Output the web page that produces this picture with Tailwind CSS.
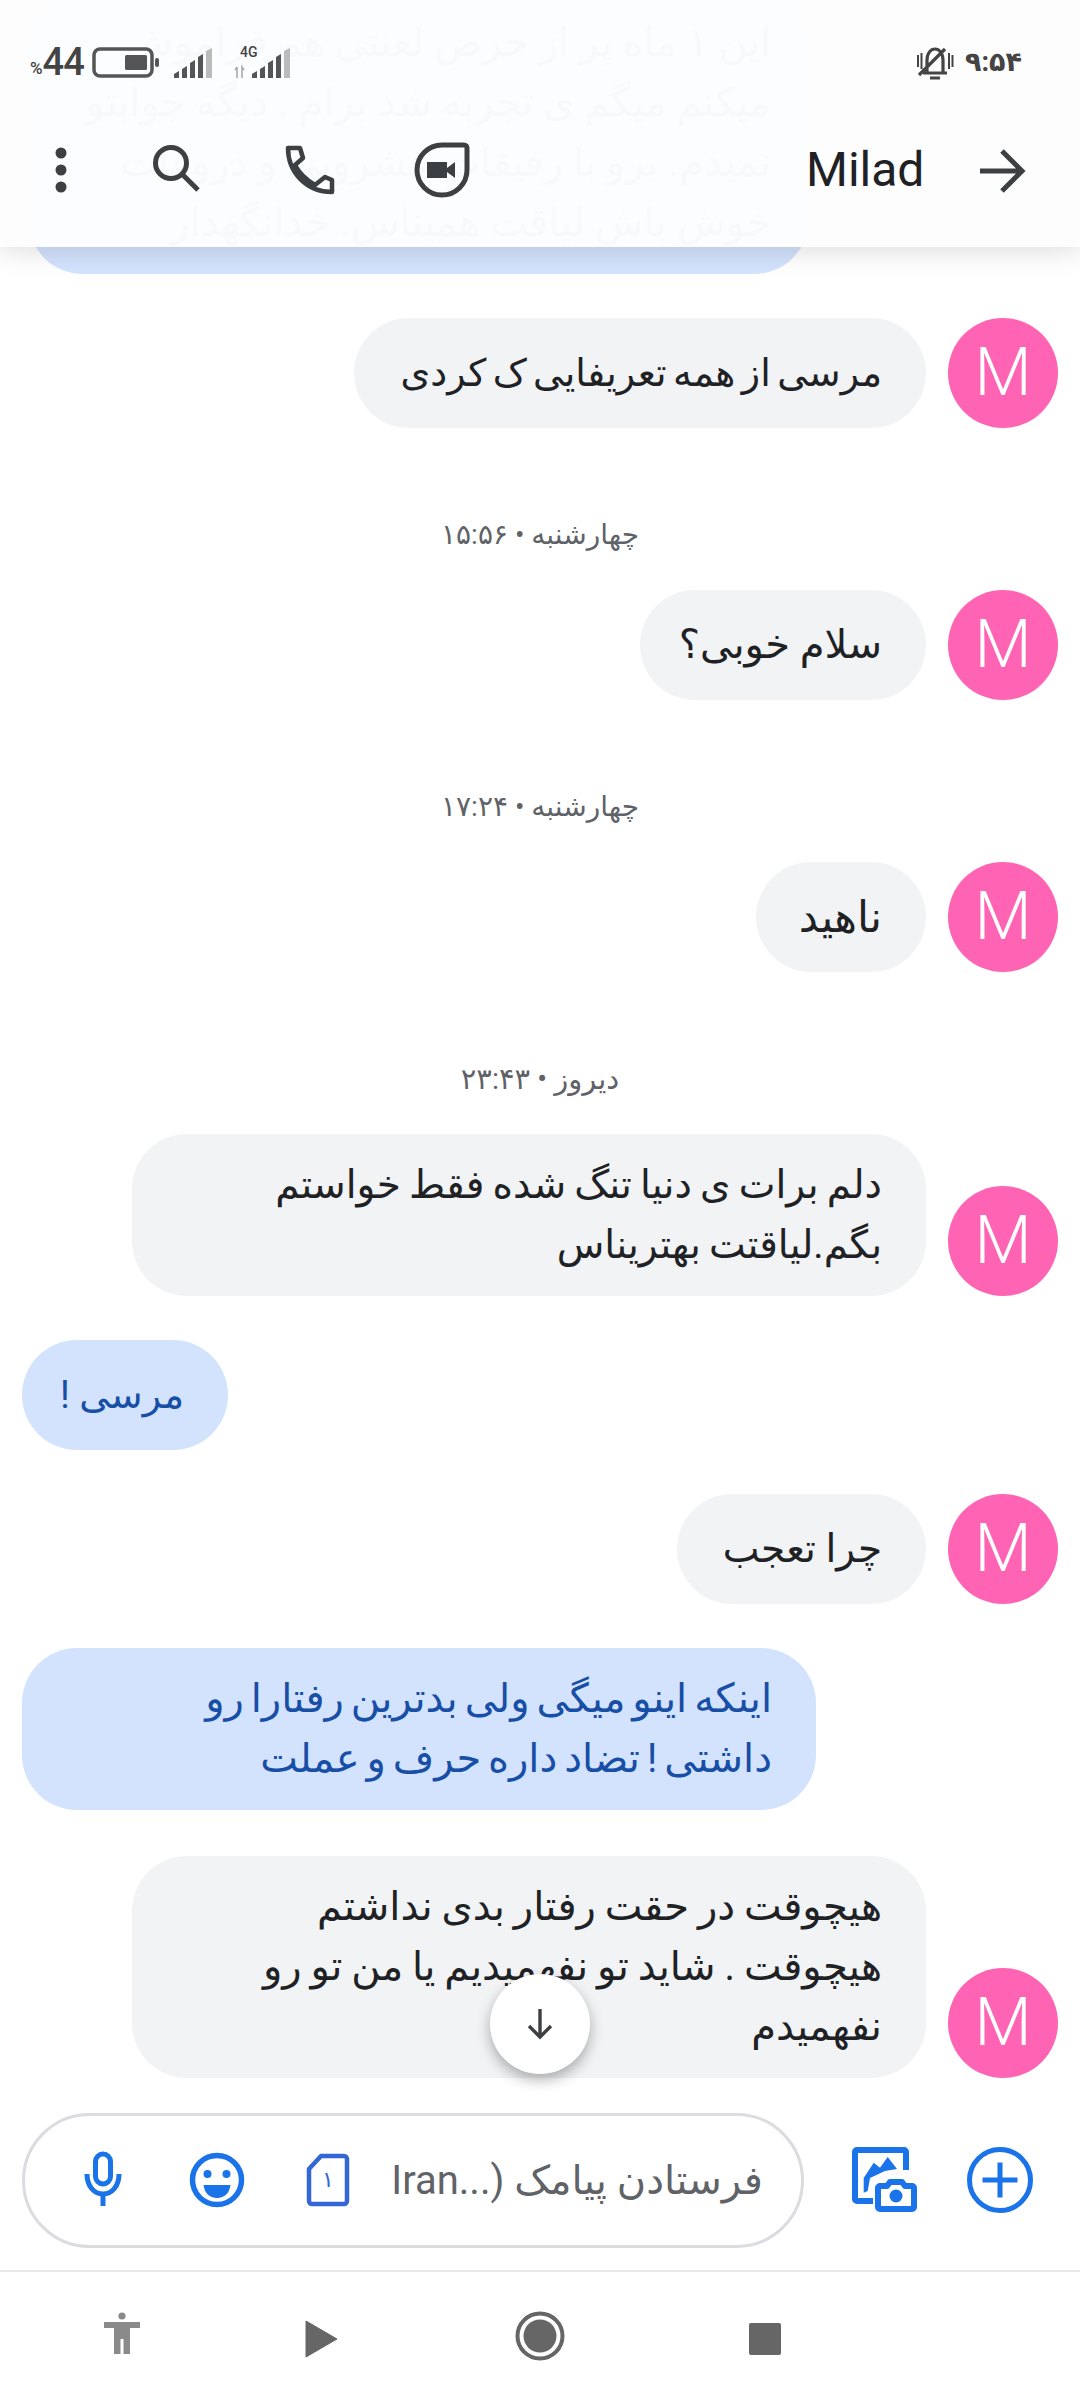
<!doctype html>
<html><head><meta charset="utf-8"><script src="https://cdn.jsdelivr.net/npm/@tailwindcss/browser@4"></script></head>
<body class="bg-white">
<div class="relative w-[1080px] h-[2400px] overflow-hidden bg-white flex flex-col font-['Roboto','DejaVu_Sans',sans-serif]">
  <main class="flex-1 min-h-0 overflow-hidden flex flex-col px-[22px] text-[40px] leading-[60px]">
    <div dir="rtl" class="ml-[6px] mt-[-8px] w-[781px] py-[21px] pr-[38px] rounded-[55px] bg-[#d3e3fd] text-[#174ea6]">این ۱ ماه پر از حرص لعنتی هم فراموش<br>میکنم میگم ی تجربه شد برام . دیگه جوابتو<br>نمیدم. برو با رفیقات عشروبی و دروغات<br>خوش باش لیاقت همیناس. خدانگهدار</div>
    <div class="mt-[44px] flex justify-end items-end gap-[22px]"><div dir="rtl" class="w-[572px] min-h-[110px] flex items-center pr-[44px] rounded-[55px] bg-[#f1f3f4] text-[#202124] text-[38px] [word-spacing:-3px]">مرسی از همه تعریفایی ک کردی</div><div class="w-[110px] h-[110px] rounded-full bg-[#ff63b4] text-white flex items-center justify-center text-[66px] font-light leading-none">M</div></div>
    <div dir="rtl" class="mt-[92px] mb-[40px] h-[30px] leading-[30px] text-center text-[28px] text-[#5f6368]">چهارشنبه • ۱۵:۵۶</div>
    <div class="flex justify-end items-end gap-[22px]"><div dir="rtl" class="w-[286px] min-h-[110px] flex items-center pr-[44px] rounded-[55px] bg-[#f1f3f4] text-[#202124]">سلام خوبی؟</div><div class="w-[110px] h-[110px] rounded-full bg-[#ff63b4] text-white flex items-center justify-center text-[66px] font-light leading-none">M</div></div>
    <div dir="rtl" class="mt-[92px] mb-[40px] h-[30px] leading-[30px] text-center text-[28px] text-[#5f6368]">چهارشنبه • ۱۷:۲۴</div>
    <div class="flex justify-end items-end gap-[22px]"><div dir="rtl" class="w-[170px] min-h-[110px] flex items-center pr-[44px] rounded-[55px] bg-[#f1f3f4] text-[#202124] text-[43px]">ناهید</div><div class="w-[110px] h-[110px] rounded-full bg-[#ff63b4] text-white flex items-center justify-center text-[66px] font-light leading-none">M</div></div>
    <div dir="rtl" class="mt-[92px] mb-[40px] h-[30px] leading-[30px] text-center text-[29px] text-[#5f6368]">دیروز • ۲۳:۴۳</div>
    <div class="flex justify-end items-end gap-[22px]"><div dir="rtl" class="w-[794px] py-[21px] pr-[44px] rounded-[55px] bg-[#f1f3f4] text-[#202124] text-[39px] [word-spacing:-1.500px]">دلم برات ی دنیا تنگ شده فقط خواستم<br>بگم.لیاقتت بهتریناس</div><div class="w-[110px] h-[110px] rounded-full bg-[#ff63b4] text-white flex items-center justify-center text-[66px] font-light leading-none">M</div></div>
    <div dir="rtl" class="mt-[44px] w-[206px] min-h-[110px] flex items-center pr-[44px] rounded-[55px] bg-[#d3e3fd] text-[#174ea6] text-[38px]">مرسی !</div>
    <div class="mt-[44px] flex justify-end items-end gap-[22px]"><div dir="rtl" class="w-[249px] min-h-[110px] flex items-center pr-[44px] rounded-[55px] bg-[#f1f3f4] text-[#202124] text-[39px]">چرا تعجب</div><div class="w-[110px] h-[110px] rounded-full bg-[#ff63b4] text-white flex items-center justify-center text-[66px] font-light leading-none">M</div></div>
    <div dir="rtl" class="mt-[44px] w-[794px] py-[21px] pr-[44px] rounded-[55px] bg-[#d3e3fd] text-[#174ea6] [word-spacing:-3px]">اینکه اینو میگی ولی بدترین رفتارا رو<br>داشتی ! تضاد داره حرف و عملت</div>
    <div class="mt-[46px] flex justify-end items-end gap-[22px]"><div dir="rtl" class="w-[794px] py-[21px] pr-[44px] rounded-[55px] bg-[#f1f3f4] text-[#202124] [word-spacing:-1px]">هیچوقت در حقت رفتار بدی نداشتم<br>هیچوقت . شاید تو نفهمیدیم یا من تو رو<br>نفهمیدم</div><div class="w-[110px] h-[110px] rounded-full bg-[#ff63b4] text-white flex items-center justify-center text-[66px] font-light leading-none">M</div></div>
  </main>

  <section class="h-[180px] shrink-0 px-[22px] py-[22px] flex items-center justify-between">
    <div class="w-[782px] h-[135px] rounded-[68px] border-[3px] border-[#dadce0] flex items-center relative">
      <svg class="ml-[53px] w-[50px] h-[60px]" viewBox="0 0 50 60" fill="none" stroke="#1a73e8"><rect x="17.5" y="4" width="15" height="30" rx="7.5" stroke-width="5"/><path d="M9 24c0 12 7 20 16 20s16-8 16-20M25 44v12" stroke-width="5"/></svg>
      <svg class="ml-[60px] w-[58px] h-[58px]" viewBox="0 0 58 58" fill="none"><circle cx="29" cy="29" r="24.5" stroke="#1a73e8" stroke-width="5.5"/><circle cx="19.5" cy="23" r="4" fill="#1a73e8"/><circle cx="38.5" cy="23" r="4" fill="#1a73e8"/><path d="M15.5 34h27c-1 8-6 13-13.500 13s-12.500-5-13.500-13z" fill="#1a73e8"/></svg>
      <div class="ml-[60px] relative w-[44px] h-[54px]">
        <svg class="w-[44px] h-[54px]" viewBox="0 0 44 54" fill="none"><path d="M15 3h23a3 3 0 0 1 3 3v42a3 3 0 0 1-3 3H6a3 3 0 0 1-3-3V16z" stroke="#3367d6" stroke-width="4.500" stroke-linejoin="round"/></svg>
        <span class="absolute inset-0 flex items-center justify-center text-[22px] leading-none text-[#3367d6]">۱</span>
      </div>
      <div dir="rtl" class="absolute right-[38px] top-[38px] w-[372px] text-[40px] leading-[54px] text-[#5f6368] whitespace-nowrap">فرستادن پیامک (<bdi dir="ltr">Iran...</bdi></div>
    </div>
    <div class="flex items-center mr-[25px] gap-[49px]">
      <svg class="w-[66px] h-[66px]" viewBox="0 0 66 66" fill="none" stroke="#1a73e8"><path d="M54 23V5a2 2 0 0 0-2-2H5a2 2 0 0 0-2 2v47a2 2 0 0 0 2 2h16" stroke-width="6"/><path d="M11.700 31l10-15.300 6.300 5 7.700-10.700L45 22l-12 2-15 7-2.300 13-4 1.700z" fill="#1a73e8" stroke="none"/><path d="M26 41a2 2 0 0 1 2-2h7l3-4h12l3 4h7a2 2 0 0 1 2 2v19a2 2 0 0 1-2 2H28a2 2 0 0 1-2-2z" fill="#fff" stroke-width="6" stroke-linejoin="round"/><circle cx="44" cy="49" r="6.500" fill="#1a73e8" stroke="none"/></svg>
      <svg class="w-[66px] h-[66px]" viewBox="0 0 66 66" fill="none" stroke="#1a73e8" stroke-width="5"><circle cx="33" cy="33" r="30.500"/><path d="M33 15.500v35M15.500 33h35"/></svg>
    </div>
  </section>

  <nav class="h-[130px] shrink-0 border-t-[2px] border-[#e8eaed] flex items-start relative">
    <svg class="absolute left-[102px] top-[40px] w-[40px] h-[42px]" viewBox="0 0 40 42" fill="#8a8a8a"><circle cx="20" cy="4" r="3.600"/><rect x="2" y="10" width="36" height="6"/><rect x="12" y="10" width="16" height="17"/><rect x="12" y="26" width="6.500" height="16"/><rect x="21.500" y="26" width="6.500" height="16"/></svg>
    <svg class="absolute left-[305px] top-[48px] w-[32px] h-[38px]" viewBox="0 0 32 38" fill="#666"><path d="M1 1l31 18L1 37z" stroke="#666" stroke-linejoin="round"/></svg>
    <svg class="absolute left-[515px] top-[39px] w-[50px] h-[50px]" viewBox="0 0 50 50" fill="none"><circle cx="25" cy="25" r="22.500" stroke="#666" stroke-width="4"/><circle cx="25" cy="25" r="16.500" fill="#666"/></svg>
    <div class="absolute left-[749px] top-[51px] w-[32px] h-[32px] rounded-[2px] bg-[#666]"></div>
  </nav>

  <header class="absolute top-0 left-0 w-full h-[247px] bg-[#fdfdfe]/98 shadow-[0_6px_24px_rgba(0,0,0,0.12)]">
    <div class="absolute left-[30px] top-[42px] h-[40px] flex items-end text-[#444]">
      <span class="text-[17px] leading-[22px] mb-[3px] font-medium">%</span><span class="text-[38px] leading-[40px] font-medium w-[40px] tracking-[-1px]">44</span>
    </div>
    <svg class="absolute left-[92px] top-[47px] w-[68px] h-[31px]" viewBox="0 0 68 31" fill="none"><rect x="2" y="2" width="58" height="27" rx="6" stroke="#555" stroke-width="3.500"/><rect x="33" y="8" width="22" height="15" rx="1.500" fill="#555"/><rect x="63" y="11" width="4" height="9" rx="2" fill="#555"/></svg>
    <svg class="absolute left-[174px] top-[48px] w-[40px] h-[30px]" viewBox="0 0 40 30"><path d="M0 30v-4l5-3v7zM8 30v-9l5-3v12zM16 30V15l5-3v18zM24 30V9l5-3v24z" fill="#555"/><path d="M32 30V3l6-3v30z" fill="#bbb"/></svg>
    <svg class="absolute left-[234px] top-[48px] w-[58px] h-[30px]" viewBox="0 0 58 30"><path d="M3 30V19M1 22l2-3M8 30V19l2 3" stroke="#aaa" stroke-width="1.600" fill="none"/><path d="M18 30v-4l5-3v7zM26 30v-9l5-3v12zM34 30V15l5-3v18zM42 30V9l5-3v24z" fill="#555"/><path d="M50 30V3l6-3v30z" fill="#bbb"/></svg>
    <div class="absolute left-[240px] top-[44px] text-[14px] leading-[16px] font-medium text-[#444]">4G</div>
    <svg class="absolute left-[916px] top-[47px] w-[38px] h-[34px]" viewBox="0 0 38 34" fill="none" stroke="#444" stroke-width="3.200"><path d="M11 26V13c0-7 4-11 8-11s8 4 8 11v13M7 26h24M14 31h10M3 28L29 2"/><path d="M2 8v12M5.500 6v16M33 6v16M36.500 8v12" stroke-width="2"/></svg>
    <div dir="ltr" class="absolute left-[965px] top-[44px] text-[27px] leading-[36px] font-bold text-[#444]">۹:۵۴</div>

    <div class="absolute left-0 top-[142px] w-full h-[56px]">
      <svg class="absolute left-[53px] top-[5px] w-[16px] h-[48px]" viewBox="0 0 16 48" fill="#3c4043"><circle cx="8" cy="6" r="5.500"/><circle cx="8" cy="23" r="5.500"/><circle cx="8" cy="40" r="5.500"/></svg>
      <svg class="absolute left-[152px] top-[3px] w-[48px] h-[48px]" viewBox="0 0 48 48" fill="none" stroke="#3c4043" stroke-width="5"><circle cx="19" cy="18" r="15.500"/><path d="M30 29l16 16"/></svg>
      <svg class="absolute left-[285px] top-[3px] w-[50px] h-[50px]" viewBox="0 0 50 50" fill="none" stroke="#3c4043" stroke-width="4.500" stroke-linejoin="round"><path d="M3 3h12l3 10-8 7c4 8 10 14 20 20l10-8 7 3v12C22 47 3 28 3 3z"/></svg>
      <svg class="absolute left-[414px] top-0 w-[56px] h-[56px]" viewBox="0 0 56 56" fill="none"><path d="M28 3h22a3 3 0 0 1 3 3v22a25 25 0 0 1-50 0a25 25 0 0 1 25-25z" stroke="#3c4043" stroke-width="5"/><path d="M13 20h20v16H13zM33 26l8-6v16l-8-6z" fill="#3c4043"/></svg>
      <div class="absolute left-[806px] top-[-4px] text-[48px] leading-[64px] text-[#202124]">Milad</div>
      <svg class="absolute left-[978px] top-[7px] w-[48px] h-[44px]" viewBox="0 0 48 44" fill="none" stroke="#3c4043" stroke-width="5"><path d="M2 22h42M24 2l20 20-20 20"/></svg>
    </div>
  </header>

  <div class="absolute left-[490px] top-[1974px] w-[100px] h-[100px] rounded-full bg-white shadow-[0_6px_14px_rgba(0,0,0,0.3)] flex items-center justify-center">
    <svg class="w-[32px] h-[32px]" viewBox="0 0 32 32" fill="none" stroke="#3c4043" stroke-width="3.400"><path d="M16 1v28M5 18l11 11 11-11"/></svg>
  </div>
</div>
</body></html>
